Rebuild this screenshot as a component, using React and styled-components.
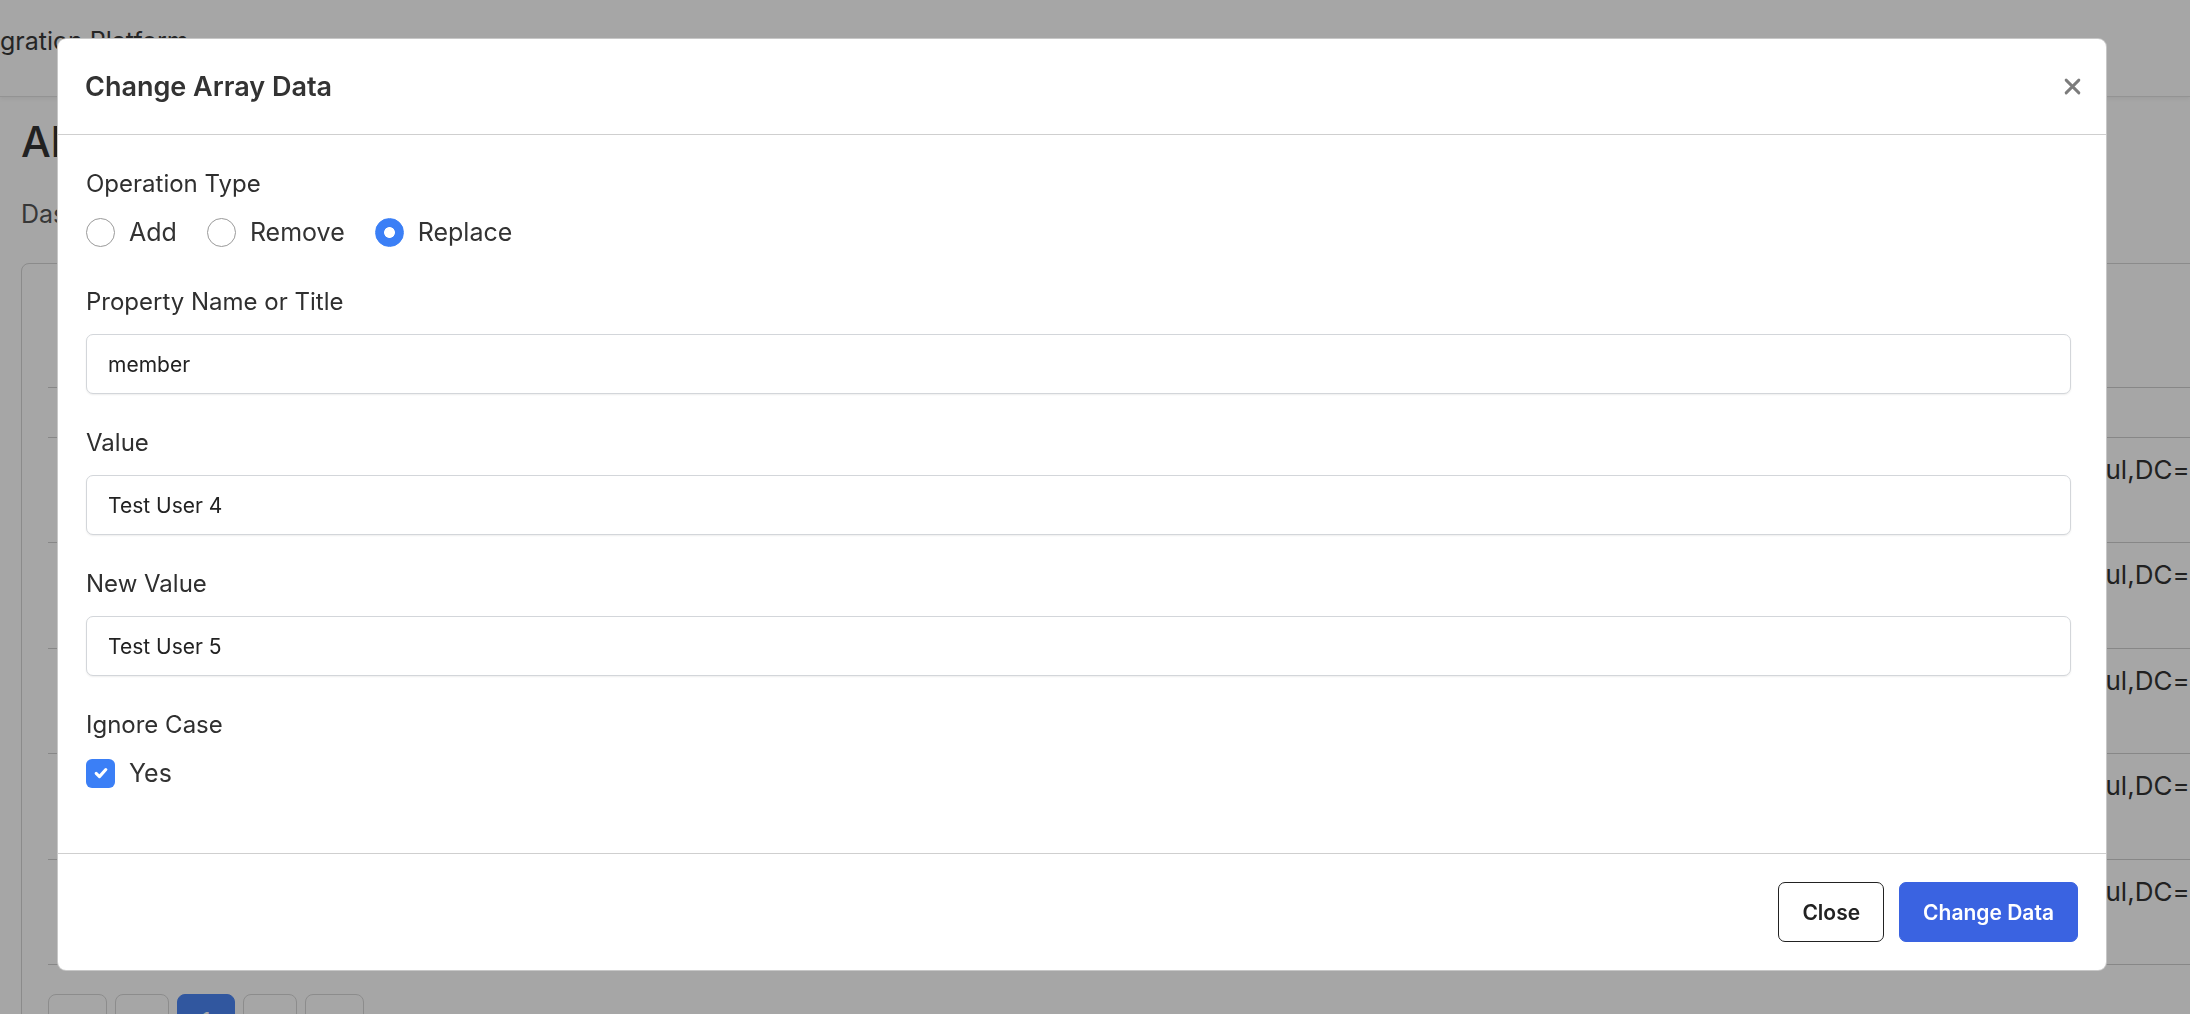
import styled, { createGlobalStyle } from "styled-components";

const GlobalStyle = createGlobalStyle`
    html, body {
        margin: 0;
        padding: 0;
        overflow: hidden;
        background: #fff;
        font-family: Inter, "Noto Sans", "Liberation Sans", sans-serif;
        color: #333;
    }
    * { box-sizing: border-box; }
`;

const rows = [1, 2, 3, 4, 5];

function App() {
    return (
        <>
            <GlobalStyle />
            <Page>
                <Navbar>
                    <Brand>gration Platform</Brand>
                </Navbar>
                <Main>
                    <PageTitle>All Groups</PageTitle>
                    <Breadcrumb>Dashboard / Groups</Breadcrumb>
                    <Card>
                        <CardToolbar />
                        <Table>
                            <HeadRow>
                                <Cell>Name</Cell>
                                <Cell>Description</Cell>
                                <Cell>Type</Cell>
                                <Cell>Distinguished Name</Cell>
                            </HeadRow>
                            {rows.map((n) => (
                                <BodyRow key={n}>
                                    <Cell>Group {n}</Cell>
                                    <Cell>Test group {n}</Cell>
                                    <Cell>Security</Cell>
                                    <Cell>DC=istanbul,DC=local</Cell>
                                </BodyRow>
                            ))}
                        </Table>
                        <Pagination>
                            <PageButton $w={59}>«</PageButton>
                            <PageButton $w={54}>‹</PageButton>
                            <PageButton $w={58} $active>1</PageButton>
                            <PageButton $w={54}>›</PageButton>
                            <PageButton $w={59}>»</PageButton>
                        </Pagination>
                    </Card>
                </Main>
            </Page>

            <Backdrop>
                <Dialog>
                    <DialogHeader>
                        <DialogTitle>Change Array Data</DialogTitle>
                        <CloseIcon aria-label="Close">
                            <svg width="17" height="17" viewBox="0 0 16 16">
                                <path d="M2 2 L14 14 M14 2 L2 14" stroke="#7c7c7c" strokeWidth="2.7" strokeLinecap="round" />
                            </svg>
                        </CloseIcon>
                    </DialogHeader>

                    <DialogBody>
                        <Field $gap={34}>
                            <Label>Operation Type</Label>
                            <OptionRow>
                                <Option>
                                    <Radio type="radio" name="op" readOnly />
                                    Add
                                </Option>
                                <Option>
                                    <Radio type="radio" name="op" readOnly />
                                    Remove
                                </Option>
                                <Option>
                                    <Radio type="radio" name="op" defaultChecked />
                                    Replace
                                </Option>
                            </OptionRow>
                        </Field>
                        <Field>
                            <Label>Property Name or Title</Label>
                            <TextInput defaultValue="member" />
                        </Field>
                        <Field>
                            <Label>Value</Label>
                            <TextInput defaultValue="Test User 4" />
                        </Field>
                        <Field>
                            <Label>New Value</Label>
                            <TextInput defaultValue="Test User 5" />
                        </Field>
                        <Field>
                            <Label>Ignore Case</Label>
                            <OptionRow>
                                <Option>
                                    <CheckBox>
                                        <svg width="22" height="22" viewBox="0 0 20 20">
                                            <path d="M5.6 10.4 L8.6 13.3 L14.4 6.9" fill="none" stroke="#fff" strokeWidth="2.8" strokeLinecap="round" strokeLinejoin="round" />
                                        </svg>
                                    </CheckBox>
                                    Yes
                                </Option>
                            </OptionRow>
                        </Field>
                    </DialogBody>

                    <DialogFooter>
                        <Button>Close</Button>
                        <Button $primary>Change Data</Button>
                    </DialogFooter>
                </Dialog>
            </Backdrop>
        </>
    );
}

export default App;

const Page = styled.div`
    width: 2190px;
    height: 1014px;
    overflow: hidden;
`;

const Navbar = styled.div`
    height: 97px;
    background: #fff;
    border-bottom: 1px solid #e2e2e2;
    box-shadow: 0 2px 4px rgba(0, 0, 0, 0.06);
    display: flex;
    align-items: center;
    padding-bottom: 14px;
`;

const Brand = styled.div`
    font-size: 25px;
    color: #3a3a3a;
    white-space: nowrap;
`;

const Main = styled.div`
    padding: 20px 0 0 21px;
`;

const PageTitle = styled.h1`
    margin: 0;
    font-size: 42px;
    line-height: 50px;
    font-weight: 500;
    color: #333;
`;

const Breadcrumb = styled.div`
    margin-top: 29px;
    font-size: 25px;
    line-height: 36px;
    color: #555;
`;

const Card = styled.div`
    margin-top: 31px;
    width: 2300px;
    height: 900px;
    border: 1px solid #d6d6d6;
    border-radius: 8px;
    padding: 0 0 0 26px;
`;

const CardToolbar = styled.div`
    height: 123px;
`;

const Table = styled.div`
    border-top: 1px solid #cfcfcf;
`;

const HeadRow = styled.div`
    display: grid;
    grid-template-columns: 420px 760px 732px 1fr;
    height: 50px;
    border-bottom: 1px solid #cfcfcf;
    font-size: 26px;
    font-weight: 600;
    color: #fff;
`;

const BodyRow = styled.div`
    display: grid;
    grid-template-columns: 420px 760px 732px 1fr;
    height: 105.4px;
    border-bottom: 1px solid #cfcfcf;
    font-size: 26px;
    line-height: 36px;
    color: #333;
`;

const Cell = styled.div`
    padding: 14px 0 0 16px;
    white-space: nowrap;
`;

const Pagination = styled.div`
    display: flex;
    gap: 8px;
    margin-top: 29px;
`;

const PageButton = styled.div`
    width: ${(p) => p.$w}px;
    height: 52px;
    border: 1px solid ${(p) => (p.$active ? "#4c86f5" : "#d8d8d8")};
    border-radius: 8px;
    background: ${(p) => (p.$active ? "#4c86f5" : "#fff")};
    color: ${(p) => (p.$active ? "#fff" : "#333")};
    font-size: 22px;
    display: flex;
    justify-content: center;
    padding-top: 12px;
`;

const Backdrop = styled.div`
    position: fixed;
    inset: 0;
    background: rgba(0, 0, 0, 0.35);
    padding: 38px 0 0 57px;
`;

const Dialog = styled.div`
    width: 2050px;
    background: #fff;
    border: 1px solid rgba(0, 0, 0, 0.22);
    border-radius: 9px;
    display: flex;
    flex-direction: column;
`;

const DialogHeader = styled.div`
    height: 96px;
    border-bottom: 1px solid #cfcfcf;
    display: flex;
    align-items: center;
    justify-content: space-between;
    padding: 0 25px 0 27px;
`;

const DialogTitle = styled.h5`
    margin: 0;
    font-size: 27px;
    font-weight: 600;
    color: #333;
`;

const CloseIcon = styled.button`
    border: none;
    background: none;
    padding: 0;
    width: 17px;
    height: 17px;
    display: flex;
    cursor: pointer;
`;

const DialogBody = styled.div`
    padding: 31px 35px 0 28px;
`;

const Field = styled.div`
    display: flex;
    flex-direction: column;
    margin-bottom: ${(p) => p.$gap || 31}px;
`;

const Label = styled.label`
    font-size: 24px;
    line-height: 36px;
    color: #2f2f2f;
    margin-bottom: 14px;
`;

const OptionRow = styled.div`
    display: flex;
    align-items: center;
    gap: 30px;
    height: 36px;
    margin-top: -2px;
`;

const Option = styled.label`
    display: flex;
    align-items: center;
    gap: 14px;
    font-size: 25px;
    line-height: 36px;
    color: #333;
`;

const Radio = styled.input`
    appearance: none;
    margin: 0;
    width: 29px;
    height: 29px;
    border-radius: 50%;
    border: 1px solid #9a9a9a;
    background: #fff;
    &:checked {
        border-color: #3b7ff6;
        background: radial-gradient(circle, #fff 0 5px, #3b7ff6 5.8px);
    }
`;

const CheckBox = styled.span`
    width: 29px;
    height: 29px;
    border-radius: 6px;
    background: #3b7ff6;
    display: flex;
    align-items: center;
    justify-content: center;
`;

const TextInput = styled.input`
    height: 60px;
    border: 1px solid #d3d6da;
    border-radius: 7px;
    box-shadow: 0 1px 2px rgba(0, 0, 0, 0.07);
    padding: 0 21px;
    font-family: inherit;
    font-size: 21px;
    color: #222;
    outline: none;
`;

const DialogFooter = styled.div`
    margin-top: 31px;
    border-top: 1px solid #cfcfcf;
    padding: 28px 28px;
    display: flex;
    justify-content: flex-end;
    gap: 15px;
`;

const Button = styled.button`
    height: 60px;
    padding: 0 23px;
    border-radius: 7px;
    font-family: inherit;
    font-size: 21px;
    font-weight: 600;
    cursor: pointer;
    border: 1px solid ${(p) => (p.$primary ? "#3a63e1" : "#222")};
    background: ${(p) => (p.$primary ? "#3a63e1" : "#fff")};
    color: ${(p) => (p.$primary ? "#fff" : "#222")};
`;
